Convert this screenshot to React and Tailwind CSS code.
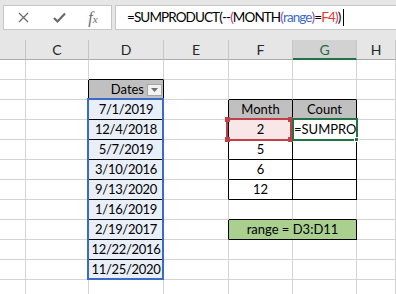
import React from "react";

// column layout (widths include the right gridline)
const cols = [
  { key: "B", w: "w-[26px]", label: "" },
  { key: "C", w: "w-[63px]", label: "C" },
  { key: "D", w: "w-[75px]", label: "D" },
  { key: "E", w: "w-[65px]", label: "E" },
  { key: "F", w: "w-[64px]", label: "F" },
  { key: "G", w: "w-[64px]", label: "G" },
  { key: "H", w: "flex-1", label: "H" },
];

const dates = [
  "7/1/2019",
  "12/4/2018",
  "5/7/2019",
  "3/10/2016",
  "9/13/2020",
  "1/16/2019",
  "2/19/2017",
  "12/22/2016",
  "11/25/2020",
];

const months = { 4: "2", 5: "5", 6: "6", 7: "12" };

// which cells carry the black table borders
const inTable = (r, c) => {
  if (c === 2 && r >= 2 && r <= 11) return true;
  if ((c === 4 || c === 5) && r >= 3 && r <= 7) return true;
  if ((c === 4 || c === 5) && r === 9) return true;
  return false;
};

function FormulaBar() {
  return (
    <div className="h-[40px] bg-[#e6e6e6] flex items-start pt-[5px] pl-[3px] gap-[3px]">
      <div className="w-[109px] h-[25px] bg-white border border-[#c6c6c6] flex items-center">
        <div className="w-[38px] flex justify-center">
          <svg width="11" height="11" viewBox="0 0 11 11">
            <path d="M1 1 L10 10 M10 1 L1 10" stroke="#6b6b6b" strokeWidth="1.3" />
          </svg>
        </div>
        <div className="w-[34px] flex justify-center">
          <svg width="13" height="11" viewBox="0 0 13 11">
            <path d="M1 6 L4.5 9.5 L12 1.5" stroke="#6b6b6b" strokeWidth="2.2" fill="none" />
          </svg>
        </div>
        <div className="w-[34px] flex justify-center items-baseline text-[#6b6b6b] font-['Liberation_Serif',serif] italic">
          <span className="text-[16px] leading-none">f</span>
          <span className="text-[11px] leading-none">x</span>
        </div>
      </div>
      <div className="flex-1 h-[25px] bg-white border border-[#c6c6c6] border-r-0 flex items-center pl-[11px] text-[13.5px] tracking-[-0.9px] font-['Lato',sans-serif] text-black whitespace-nowrap">
        <span>=SUMPRODUCT(--</span>
        <span className="text-[#c0398a]">(</span>
        <span>MONTH</span>
        <span className="text-[#8a4fc0]">(</span>
        <span className="text-[#3c6cc8]">range</span>
        <span className="text-[#8a4fc0]">)</span>
        <span>=</span>
        <span className="text-[#e03c31]">F4</span>
        <span className="text-[#c0398a]">)</span>
        <span>)</span>
        <span className="ml-[3px] w-px h-[17px] bg-black" />
      </div>
    </div>
  );
}

function HeaderRow() {
  return (
    <div className="flex h-[20px] bg-[#e6e6e6] text-[14px] font-['Lato',sans-serif] text-[#262626]">
      {cols.map((c) => (
        <div
          key={c.key}
          className={
            c.key === "G"
              ? `${c.w} h-full bg-[#d2d2d2] border-r border-r-[#c6c6c6] border-b-2 border-b-[#217346] flex items-center justify-center text-[#1e6e42]`
              : `${c.w} h-full border-r border-r-[#c6c6c6] border-b border-b-[#ababab] flex items-center justify-center`
          }
        >
          {c.label}
        </div>
      ))}
    </div>
  );
}

function cellContent(r, c) {
  if (c === 2 && r === 2)
    return (
      <div className="w-full h-full bg-[#c0c0c0] flex items-center justify-end pr-[1px] gap-[3px]">
        <span>Dates</span>
        <span className="w-[15px] h-[12px] bg-[#f2f2f2] border border-[#a6a6a6] flex items-center justify-center">
          <svg width="7" height="4" viewBox="0 0 7 4">
            <path d="M0 0 L7 0 L3.5 4 Z" fill="#6f6f6f" />
          </svg>
        </span>
      </div>
    );
  if (c === 2 && r >= 3 && r <= 11)
    return (
      <div className="w-full h-full bg-[#e9eff8] flex items-center justify-center tracking-[-0.3px]">
        {dates[r - 3]}
      </div>
    );
  if (r === 3 && (c === 4 || c === 5))
    return (
      <div className="w-full h-full bg-[#c0c0c0] flex items-center justify-center">
        {c === 4 ? "Month" : "Count"}
      </div>
    );
  if (c === 4 && months[r])
    return (
      <div className={`w-full h-full flex items-center justify-center ${r === 4 ? "bg-[#f9e6e6]" : ""}`}>
        {months[r]}
      </div>
    );
  if (c === 5 && r === 4)
    return <div className="w-full h-full flex items-center pl-[1px] overflow-hidden whitespace-nowrap">=SUMPRO</div>;
  return null;
}

function Overlay(r, c) {
  // D3:D11 range highlight (blue)
  if (c === 2 && r === 3)
    return (
      <div className="absolute z-10 left-[-2px] top-[-2px] w-[77px] h-[182px] border-2 border-[#3a6bc7] pointer-events-none" />
    );
  // F4 reference highlight (red) with corner handles
  if (c === 4 && r === 4)
    return (
      <div className="absolute z-10 left-[-3px] top-[-2px] w-[66px] h-[23px] border-2 border-[#c0404a] pointer-events-none">
        <span className="absolute -left-[3px] -top-[3px] w-[5px] h-[5px] bg-[#c0404a]" />
        <span className="absolute -right-[3px] -top-[3px] w-[5px] h-[5px] bg-[#c0404a]" />
        <span className="absolute -left-[3px] -bottom-[3px] w-[5px] h-[5px] bg-[#c0404a]" />
        <span className="absolute -right-[3px] -bottom-[3px] w-[5px] h-[5px] bg-[#c0404a]" />
      </div>
    );
  // G4 active cell (green)
  if (c === 5 && r === 4)
    return (
      <div className="absolute z-10 left-[-1px] top-[-2px] w-[66px] h-[23px] border-2 border-[#217346] pointer-events-none">
        <span className="absolute -right-[3px] -bottom-[3px] w-[5px] h-[5px] bg-[#217346] border border-white" />
      </div>
    );
  return null;
}

function Row({ r }) {
  if (r === 9) {
    // merged F9:G9 label
    return (
      <div className="flex h-[20px]">
        {cols.map((c, ci) => {
          if (ci === 5) return null;
          if (ci === 4)
            return (
              <div key={c.key} className="w-[128px] h-full border-r border-b border-r-black border-b-black bg-[#a9d08e] flex items-center justify-center">
                range = D3:D11
              </div>
            );
          return <Cell key={c.key} r={r} ci={ci} w={c.w} />;
        })}
      </div>
    );
  }
  return (
    <div className="flex h-[20px]">
      {cols.map((c, ci) => (
        <Cell key={c.key} r={r} ci={ci} w={c.w} />
      ))}
    </div>
  );
}

function Cell({ r, ci, w }) {
  const rightBlack = inTable(r, ci) || inTable(r, ci + 1);
  const bottomBlack = inTable(r, ci) || inTable(r + 1, ci);
  return (
    <div
      className={`${w} h-full relative border-r border-b ${rightBlack ? "border-r-black" : "border-r-[#d4d4d4]"} ${bottomBlack ? "border-b-black" : "border-b-[#d4d4d4]"}`}
    >
      {cellContent(r, ci)}
      {Overlay(r, ci)}
    </div>
  );
}

export default function App() {
  const rows = [1, 2, 3, 4, 5, 6, 7, 8, 9, 10, 11, 12];
  return (
    <div className="w-[396px] h-[294px] overflow-hidden bg-white font-['Lato',sans-serif] text-[13px] text-black">
      <FormulaBar />
      <HeaderRow />
      {rows.map((r) => (
        <Row key={r} r={r} />
      ))}
    </div>
  );
}
